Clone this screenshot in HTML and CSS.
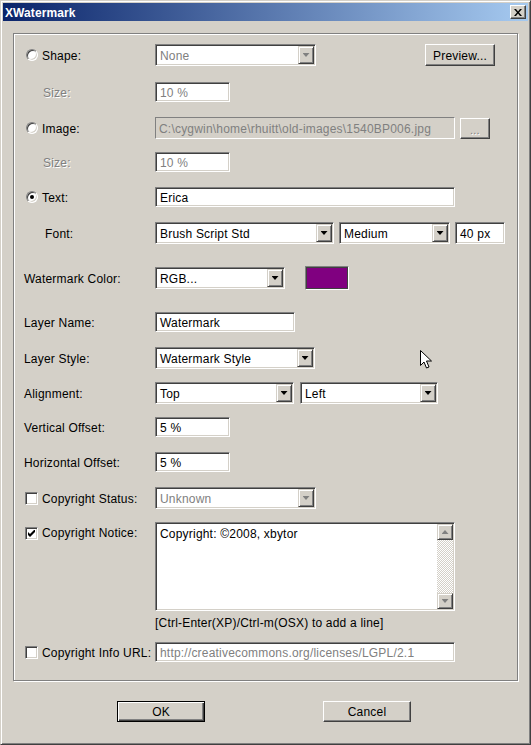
FILE: index.html
```html
<!DOCTYPE html>
<html>
<head>
<meta charset="utf-8">
<title>XWatermark</title>
<link rel="stylesheet" href="styles.css">
</head>
<body>
<div class="window">
  <div class="titlebar">
    <span class="title">XWatermark</span>
    <span class="close">
      <svg width="8" height="7" viewBox="0 0 8 7"><path d="M0 0h2l2 2.5 2-2.5h2l-3 3.5 3 3.5h-2l-2-2.5-2 2.5h-2l3-3.5z" fill="#000"/></svg>
    </span>
  </div>
  <div class="content">
    <div class="group">
      <div class="row">
        <div class="lbl"><span class="radio"></span>Shape:</div>
        <div class="select dis w161"><span class="val">None</span><span class="drop"></span></div>
        <button class="btn preview">Preview...</button>
      </div>
      <div class="row g15">
        <div class="lbl indent dis">Size:</div>
        <div class="field dis w75">10 %</div>
      </div>
      <div class="row g14">
        <div class="lbl"><span class="radio"></span>Image:</div>
        <div class="field ro w300 h22">C:\cygwin\home\rhuitt\old-images\1540BP006.jpg</div>
        <button class="btn dots" disabled>...</button>
      </div>
      <div class="row g12">
        <div class="lbl indent dis">Size:</div>
        <div class="field dis w75">10 %</div>
      </div>
      <div class="row">
        <div class="lbl"><span class="radio on"></span>Text:</div>
        <div class="field w300">Erica</div>
      </div>
      <div class="row g14">
        <div class="lbl indent2">Font:</div>
        <div class="select w179"><span class="val">Brush Script Std</span><span class="drop"></span></div>
        <div class="select w111 ml5"><span class="val">Medium</span><span class="drop"></span></div>
        <div class="field w50 ml5 h22">40 px</div>
      </div>
      <div class="row g23">
        <div class="lbl">Watermark Color:</div>
        <div class="select w130"><span class="val">RGB...</span><span class="drop"></span></div>
        <div class="swatch"></div>
      </div>
      <div class="row g22">
        <div class="lbl">Layer Name:</div>
        <div class="field w140">Watermark</div>
      </div>
      <div class="row g14">
        <div class="lbl">Layer Style:</div>
        <div class="select w160 h21"><span class="val">Watermark Style</span><span class="drop"></span></div>
      </div>
      <div class="row">
        <div class="lbl">Alignment:</div>
        <div class="select w139"><span class="val">Top</span><span class="drop"></span></div>
        <div class="select w138 ml6"><span class="val">Left</span><span class="drop"></span></div>
      </div>
      <div class="row g12">
        <div class="lbl">Vertical Offset:</div>
        <div class="field w75">5 %</div>
      </div>
      <div class="row">
        <div class="lbl">Horizontal Offset:</div>
        <div class="field w75">5 %</div>
      </div>
      <div class="row g14">
        <div class="lbl"><span class="check"></span>Copyright Status:</div>
        <div class="select dis w161 h21"><span class="val">Unknown</span><span class="drop"></span></div>
      </div>
      <div class="row top">
        <div class="lbl"><span class="check on"><svg width="7" height="7" viewBox="0 0 7 7"><path d="M0 2v3l2 2 5-5V-1L2 4z" fill="#000"/></svg></span>Copyright Notice:</div>
        <div class="memo">
          <div class="memo-text">Copyright: ©2008, xbytor</div>
          <div class="scroll">
            <span class="sbtn up"></span>
            <span class="track"></span>
            <span class="sbtn down"></span>
          </div>
        </div>
      </div>
      <div class="hint">[Ctrl-Enter(XP)/Ctrl-m(OSX) to add a line]</div>
      <div class="row url">
        <div class="lbl"><span class="check"></span>Copyright Info URL:</div>
        <div class="field dis w300">http://creativecommons.org/licenses/LGPL/2.1</div>
      </div>
    </div>
    <div class="actions">
      <button class="btn action default">OK</button>
      <button class="btn action">Cancel</button>
    </div>
  </div>
  <svg class="cursor" width="13" height="20" viewBox="0 0 13 20"><path d="M0.5 0.5v15l3.5-3.5 2.5 6 2.5-1-2.5-6h5z" fill="#fff" stroke="#000" stroke-width="1"/></svg>
</div>
</body>
</html>
```

FILE: styles.css
```css
* { box-sizing: border-box; }
html, body { margin: 0; padding: 0; }
body {
  width: 531px;
  height: 745px;
  overflow: hidden;
  background: #d4d0c8;
  font-family: "Liberation Sans", Arial, sans-serif;
  font-size: 12px;
  letter-spacing: 0.2px;
  color: #000;
}
.window {
  position: relative;
  width: 531px;
  height: 745px;
  background: #d4d0c8;
  border: 1px solid;
  border-color: #d4d0c8 #404040 #404040 #d4d0c8;
  box-shadow: inset 1px 1px #fff, inset -1px -1px #808080;
  padding: 2px;
}
.titlebar {
  height: 18px;
  background: linear-gradient(90deg, #0a246a 0%, #a6caf0 100%);
  display: flex;
  align-items: center;
  justify-content: space-between;
  padding: 0 2px 0 2px;
}
.title {
  color: #fff;
  font-weight: bold;
  font-size: 12px;
  letter-spacing: 0.1px;
  padding-top: 1px;
}
.close {
  width: 16px;
  height: 14px;
  background: #d4d0c8;
  border: 1px solid;
  border-color: #fff #404040 #404040 #fff;
  box-shadow: inset -1px -1px #808080;
  display: flex;
  align-items: center;
  justify-content: center;
}
.close svg { display: block; margin-left: -1px; }
.content { padding: 0 10px; }
.group {
  margin-top: 12px;
  height: 648px;
  border: 1px solid #808080;
  box-shadow: inset 1px 1px #fff, 1px 1px #fff;
  padding: 10px 0 0 10px;
}
.row {
  display: flex;
  align-items: center;
  height: 22px;
  margin-top: 13px;
}
.row:first-child { margin-top: 0; }
.row.g12 { margin-top: 12px; }
.row.g14 { margin-top: 14px; }
.row.g15 { margin-top: 15px; }
.row.g22 { margin-top: 22px; }
.row.g23 { margin-top: 23px; }
.row.top { align-items: flex-start; height: auto; }
.row.top .lbl { margin-top: 4px; padding-top: 0; }
.row.url { margin-top: 11px; }
.lbl {
  width: 131px;
  flex: none;
  display: flex;
  align-items: center;
  white-space: nowrap;
  padding-top: 1px;
}
.lbl .radio, .lbl .check { margin-top: -1px; }
.row.top .lbl .check { margin-top: 0; }
.lbl.indent { padding-left: 19px; }
.lbl.indent2 { padding-left: 21px; }
.lbl.dis { color: #808080; text-shadow: 1px 1px #fff; }
.radio {
  width: 12px;
  height: 12px;
  flex: none;
  margin: 0 4px 0 2px;
  border-radius: 50%;
  background: #fff;
  border: 1px solid;
  border-color: #808080 #fff #fff #808080;
  box-shadow: inset 1px 1px #404040, inset -1px -1px #d4d0c8;
  display: flex;
  align-items: center;
  justify-content: center;
}
.radio.on::after {
  content: "";
  width: 4px;
  height: 4px;
  border-radius: 50%;
  background: #000;
}
.check {
  width: 13px;
  height: 13px;
  flex: none;
  margin: 0 4px 0 1px;
  background: #fff;
  border: 1px solid;
  border-color: #808080 #fff #fff #808080;
  box-shadow: inset 1px 1px #404040, inset -1px -1px #d4d0c8;
  display: flex;
  align-items: center;
  justify-content: center;
}
.check svg { display: block; }
.field {
  height: 20px;
  flex: none;
  background: #fff;
  border: 1px solid;
  border-color: #808080 #fff #fff #808080;
  box-shadow: inset 1px 1px #404040, inset -1px -1px #d4d0c8;
  padding: 1px 4px 0;
  display: flex;
  align-items: center;
  white-space: nowrap;
  overflow: hidden;
}
.field.dis { color: #808080; }
.field.ro {
  background: #d4d0c8;
  color: #808080;
  box-shadow: none;
  padding-left: 3px;
}
.h22 { height: 22px; }
.h21 { height: 21px; }
.w50 { width: 50px; }
.w75 { width: 75px; }
.w111 { width: 111px; }
.w130 { width: 130px; }
.w138 { width: 138px; }
.w139 { width: 139px; }
.w140 { width: 140px; }
.w160 { width: 160px; }
.w161 { width: 161px; }
.w179 { width: 179px; }
.w300 { width: 300px; }
.ml5 { margin-left: 5px; }
.ml6 { margin-left: 6px; }
.select {
  height: 22px;
  flex: none;
  display: flex;
  background: #fff;
  border: 1px solid;
  border-color: #808080 #fff #fff #808080;
  box-shadow: inset 1px 1px #404040, inset -1px -1px #d4d0c8;
  padding: 1px;
}
.select .val {
  flex: 1;
  display: flex;
  align-items: center;
  padding: 1px 0 0 3px;
  white-space: nowrap;
  overflow: hidden;
}
.select.dis .val { color: #808080; }
.drop, .sbtn {
  width: 16px;
  flex: none;
  background: #d4d0c8;
  border: 1px solid;
  border-color: #d4d0c8 #404040 #404040 #d4d0c8;
  box-shadow: inset 1px 1px #fff, inset -1px -1px #808080;
  display: flex;
  align-items: center;
  justify-content: center;
}
.drop::after, .sbtn::after {
  content: "";
  width: 7px;
  height: 4px;
  background: #000;
  clip-path: polygon(0 0, 100% 0, 50% 100%);
}
.select.dis .drop::after { background: #808080; }
.swatch {
  width: 44px;
  height: 24px;
  margin-left: 20px;
  background: #800080;
  border: 1px solid;
  border-color: #808080 #fff #fff #808080;
  box-shadow: inset 0 0 0 1px #404040;
}
.btn {
  font-family: inherit;
  font-size: 12px;
  letter-spacing: 0.2px;
  color: #000;
  background: #d4d0c8;
  border: 1px solid;
  border-color: #fff #404040 #404040 #fff;
  box-shadow: inset -1px -1px #808080;
  padding: 1px 0 0;
  margin: 0;
}
.btn.preview {
  width: 70px;
  height: 22px;
  margin-left: 109px;
}
.btn.dots {
  width: 30px;
  height: 21px;
  margin-left: 5px;
  color: #808080;
  text-shadow: 1px 1px #fff;
  font-size: 11px;
  padding-top: 3px;
}
.memo {
  width: 300px;
  height: 89px;
  flex: none;
  display: flex;
  background: #fff;
  border: 1px solid;
  border-color: #808080 #fff #fff #808080;
  box-shadow: inset 1px 1px #404040, inset -1px -1px #d4d0c8;
  padding: 1px;
}
.memo-text {
  flex: 1;
  padding: 3px 3px;
  line-height: 14px;
}
.scroll {
  width: 16px;
  display: flex;
  flex-direction: column;
}
.sbtn { height: 16px; width: 16px; }
.sbtn::after { background: #808080; }
.sbtn.up::after { clip-path: polygon(50% 0, 100% 100%, 0 100%); }
.track {
  flex: 1;
  background: repeating-conic-gradient(#fff 0 25%, #d4d0c8 0 50%) 0 0 / 2px 2px;
}
.hint {
  margin: 5px 0 0 131px;
  line-height: 14px;
}
.actions {
  display: flex;
  margin-top: 20px;
  padding-left: 104px;
  gap: 118px;
}
.btn.action {
  width: 88px;
  height: 21px;
}
.btn.default {
  border: 1px solid #000;
  box-shadow: inset 1px 1px #fff, inset -1px -1px #404040, inset -2px -2px #808080;
}
.cursor {
  position: absolute;
  left: 419px;
  top: 349px;
}
```
